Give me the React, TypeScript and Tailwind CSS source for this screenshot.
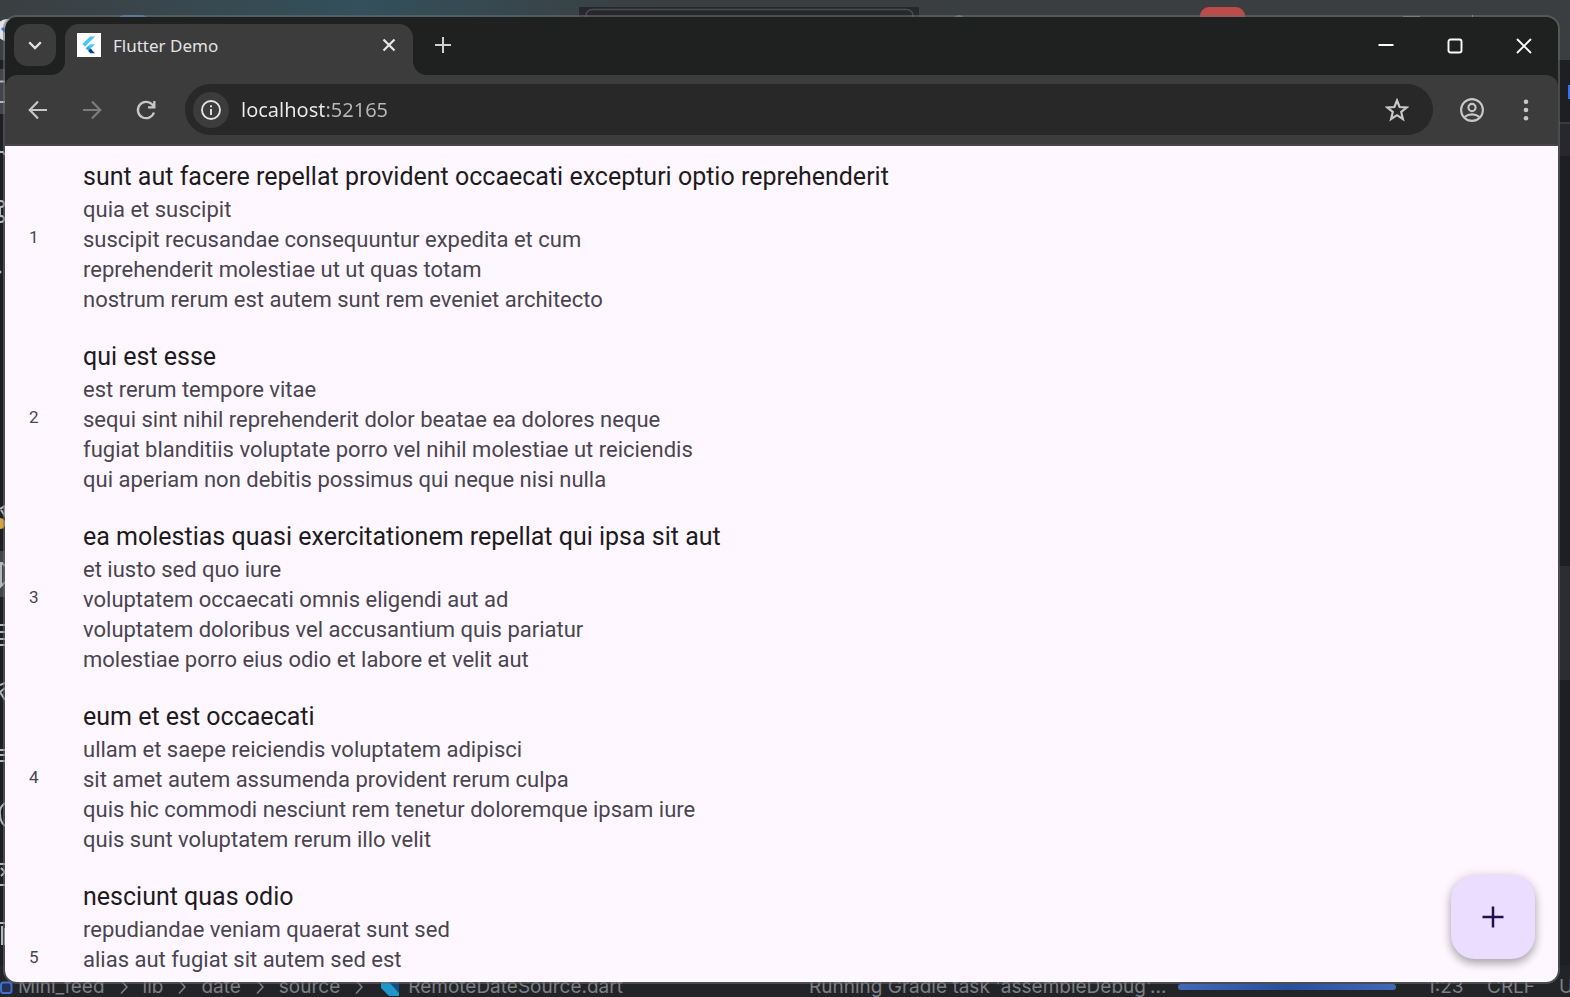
import React from "react";

type Post = { id: number; title: string; body: string[] };

const posts: Post[] = [
  {
    id: 1,
    title: "sunt aut facere repellat provident occaecati excepturi optio reprehenderit",
    body: [
      "quia et suscipit",
      "suscipit recusandae consequuntur expedita et cum",
      "reprehenderit molestiae ut ut quas totam",
      "nostrum rerum est autem sunt rem eveniet architecto",
    ],
  },
  {
    id: 2,
    title: "qui est esse",
    body: [
      "est rerum tempore vitae",
      "sequi sint nihil reprehenderit dolor beatae ea dolores neque",
      "fugiat blanditiis voluptate porro vel nihil molestiae ut reiciendis",
      "qui aperiam non debitis possimus qui neque nisi nulla",
    ],
  },
  {
    id: 3,
    title: "ea molestias quasi exercitationem repellat qui ipsa sit aut",
    body: [
      "et iusto sed quo iure",
      "voluptatem occaecati omnis eligendi aut ad",
      "voluptatem doloribus vel accusantium quis pariatur",
      "molestiae porro eius odio et labore et velit aut",
    ],
  },
  {
    id: 4,
    title: "eum et est occaecati",
    body: [
      "ullam et saepe reiciendis voluptatem adipisci",
      "sit amet autem assumenda provident rerum culpa",
      "quis hic commodi nesciunt rem tenetur doloremque ipsam iure",
      "quis sunt voluptatem rerum illo velit",
    ],
  },
  {
    id: 5,
    title: "nesciunt quas odio",
    body: ["repudiandae veniam quaerat sunt sed", "alias aut fugiat sit autem sed est"],
  },
];

function FlutterLogo() {
  return (
    <svg viewBox="0 0 24 24" className="size-6 shrink-0" aria-hidden="true">
      <rect width="24" height="24" fill="#fff" />
      <path d="M13.2 3.5H18L8 13.4 5.3 10.9Z" fill="#47c5fb" />
      <path d="M13.3 11.2H18L13.6 15.6 10.9 13.2Z" fill="#47c5fb" />
      <path d="M8.6 15.5 11.2 12.9 15.5 17.3 12.6 18.5Z" fill="#35a9e8" />
      <path d="M11.2 18.1 13.6 15.7 18 20.2H13.4Z" fill="#0b3f8f" />
    </svg>
  );
}

function TabFlare({ side }: { side: "left" | "right" }) {
  return (
    <svg viewBox="0 0 14 14" className="size-[14px] shrink-0 self-end" aria-hidden="true">
      <path d={side === "left" ? "M14 0V14H0A14 14 0 0 0 14 0Z" : "M0 0V14H14A14 14 0 0 1 0 0Z"} fill="#3c3c3c" />
    </svg>
  );
}

function TabStrip() {
  return (
    <header className="flex h-[58px] shrink-0 bg-[#1f2120] pt-[7px] pl-[9px]">
      <button aria-label="Search tabs" className="flex size-[42px] items-center justify-center rounded-[14px] bg-[#3c3c3c]">
        <svg viewBox="0 0 14 14" className="size-[14px]" fill="none" stroke="#e3e3e3" strokeWidth="2.3" aria-hidden="true">
          <path d="M1.2 4.2 7 10 12.8 4.2" />
        </svg>
      </button>
      <div className="-ml-[5px] flex">
        <TabFlare side="left" />
        <div className="flex w-[348px] items-center rounded-t-[14px] bg-[#3c3c3c] pr-4 pb-[9px] pl-3">
          <FlutterLogo />
          <span className="ml-3 flex-1 pt-[2px] font-['Noto_Sans','Open_Sans',sans-serif] text-[17px] leading-6 text-[#e3e3e3]">
            Flutter Demo
          </span>
          <button aria-label="Close tab" className="flex size-4 items-center justify-center">
            <svg viewBox="0 0 14 14" className="size-[14px]" fill="none" stroke="#e8e8e8" strokeWidth="2.2" aria-hidden="true">
              <path d="M1.5 1.5 12.5 12.5M12.5 1.5 1.5 12.5" />
            </svg>
          </button>
        </div>
        <TabFlare side="right" />
      </div>
      <button aria-label="New tab" className="ml-2 flex h-[42px] w-4 items-center justify-center">
        <svg viewBox="0 0 16 16" className="size-4" fill="none" stroke="#d0d0d0" strokeWidth="2" aria-hidden="true">
          <path d="M8 0V16M0 8H16" />
        </svg>
      </button>
      <div className="ml-auto flex h-11 text-white">
        <button aria-label="Minimize" className="flex w-[69px] items-center justify-center">
          <svg viewBox="0 0 16 16" className="size-4" aria-hidden="true">
            <path d="M.5 7H15.5" stroke="currentColor" strokeWidth="2" />
          </svg>
        </button>
        <button aria-label="Maximize" className="flex w-[69px] items-center justify-center">
          <svg viewBox="0 0 16 16" className="size-4" aria-hidden="true">
            <rect x="1.5" y="1.5" width="13" height="13" rx="2" fill="none" stroke="currentColor" strokeWidth="1.9" />
          </svg>
        </button>
        <button aria-label="Close" className="flex w-[69px] items-center justify-center">
          <svg viewBox="0 0 16 16" className="size-4" aria-hidden="true">
            <path d="M1 1 15 15M15 1 1 15" stroke="currentColor" strokeWidth="1.9" />
          </svg>
        </button>
      </div>
    </header>
  );
}

function Toolbar() {
  return (
    <div className="bg-[#1f2120]">
      <div className="flex h-[71px] items-center rounded-t-[12px] border-b-2 border-[#464648] bg-[#3c3c3c] pr-5">
        <div className="flex w-[180px] items-center gap-[30px] pl-[21px] text-[#c7c7c7]">
          <button aria-label="Back">
            <svg viewBox="0 0 24 24" className="size-6" fill="none" stroke="currentColor" strokeWidth="2.2" aria-hidden="true">
              <path d="M21 12H4.5M12 3.5 3.8 12 12 20.5" />
            </svg>
          </button>
          <button aria-label="Forward" className="text-[#7c7c7c]" disabled>
            <svg viewBox="0 0 24 24" className="size-6" fill="none" stroke="currentColor" strokeWidth="2.2" aria-hidden="true">
              <path d="M3 12H19.5M12 3.5 20.2 12 12 20.5" />
            </svg>
          </button>
          <button aria-label="Reload">
            <svg viewBox="0 0 24 24" className="size-6" fill="none" stroke="currentColor" strokeWidth="2.3" aria-hidden="true">
              <path d="M19.9 14.5A8.2 8.2 0 1 1 18.2 6.5L20.3 8.8M20.3 3V9.3H14" />
            </svg>
          </button>
        </div>
        <div className="flex h-[51px] min-w-0 flex-1 items-center rounded-full bg-[#282828] pr-6 pl-2">
          <button aria-label="Site information" className="flex size-9 items-center justify-center rounded-full bg-[#3c3c3c]">
            <svg viewBox="0 0 20 20" className="size-5" fill="none" stroke="#e3e3e3" strokeWidth="1.9" aria-hidden="true">
              <circle cx="10" cy="10" r="9" />
              <path d="M10 9V15M10 5.2V7.2" />
            </svg>
          </button>
          <input
            aria-label="Address"
            defaultValue="localhost:52165"
            className="ml-3 min-w-0 flex-1 bg-linear-to-r from-[#ededed] from-[83px] to-[#b8b8b8] to-[83px] bg-clip-text font-['Noto_Sans','Open_Sans',sans-serif] text-[20px] leading-8 text-transparent outline-none"
          />
          <button aria-label="Bookmark">
            <svg viewBox="0 0 24 24" className="size-6" fill="none" stroke="#c7c7c7" strokeWidth="2.2" aria-hidden="true">
              <path d="M12 2.5 14.6 9 21.6 9.5 16.2 14 17.9 21 12 17.2 6.1 21 7.8 14 2.4 9.5 9.4 9Z" />
            </svg>
          </button>
        </div>
        <button aria-label="Profile" className="ml-[27px]">
          <svg viewBox="0 0 24 24" className="size-6" fill="none" stroke="#c7c7c7" strokeWidth="2.1" aria-hidden="true">
            <circle cx="12" cy="12" r="10.9" />
            <circle cx="12" cy="9.5" r="3.6" />
            <path d="M4.5 19C9 15.5 15 15.5 19.5 19" />
          </svg>
        </button>
        <button aria-label="Menu" className="ml-[30px]">
          <svg viewBox="0 0 24 24" className="size-6" fill="#c7c7c7" aria-hidden="true">
            <circle cx="12" cy="3.8" r="2.3" />
            <circle cx="12" cy="12" r="2.3" />
            <circle cx="12" cy="20.2" r="2.3" />
          </svg>
        </button>
      </div>
    </div>
  );
}

function PostItem({ post }: { post: Post }) {
  return (
    <li className="flex items-center pt-[13px] pb-[11px] pl-6">
      <span className="w-[54px] shrink-0 text-[17px] leading-6 text-[#49454f]">{post.id}</span>
      <div className="min-w-0">
        <h2 className="text-[25px] leading-9 text-[#1d1b20]">{post.title}</h2>
        <div className="min-h-[120px] text-[22px] leading-[30px] text-[#49454f]">
          {post.body.map((line) => (
            <p key={line}>{line}</p>
          ))}
        </div>
      </div>
    </li>
  );
}

function BrowserWindow() {
  return (
    <div className="absolute top-[15px] right-[10px] bottom-[13px] left-[3px] flex flex-col overflow-hidden rounded-[14px] border-2 border-[#6c6e70]/55">
      <TabStrip />
      <Toolbar />
      <main className="relative min-h-0 flex-1 bg-[#fef7ff] font-[Roboto,sans-serif]">
        <ul className="h-full overflow-y-auto [scrollbar-width:none]">
          {posts.map((post) => (
            <PostItem key={post.id} post={post} />
          ))}
        </ul>
        <button
          aria-label="Add"
          className="absolute right-[23px] bottom-[23px] flex size-[84px] items-center justify-center rounded-3xl bg-[#eaddff] shadow-[0_5px_8px_rgba(0,0,0,0.25),0_1px_12px_rgba(0,0,0,0.14)]"
        >
          <svg viewBox="0 0 22 22" className="size-[22px]" stroke="#21104d" strokeWidth="2.5" aria-hidden="true">
            <path d="M11 .5V21.5M.5 11H21.5" />
          </svg>
        </button>
      </main>
    </div>
  );
}

function ToolStripe() {
  return (
    <svg viewBox="0 0 5 905" className="h-[905px] w-[5px] shrink-0" fill="none" stroke="#b4b8bf" strokeWidth="2" aria-hidden="true">
      <path d="M0 9H5V54H0Z" fill="#43454a" stroke="none" />
      <path d="M0 21.5H5M0 42H5M0 92H3L5 95" />
      <circle cx="1" cy="144" r="3" />
      <circle cx="1" cy="159" r="3" />
      <path d="M0 147V156" />
      <circle cx="0" cy="212" r="1.5" fill="#b4b8bf" stroke="none" />
      <path d="M0 449 5 446V456L1 450" />
      <path d="M0 458A5.5 5.5 0 0 1 0 469Z" fill="#d5a441" stroke="none" />
      <path d="M0 491H5V537H0Z" fill="#43454a" stroke="none" />
      <path d="M0 503H2L5 506M1 504V526L5 522M0 565H5M0 572H5M0 579H5M0 585H5" />
      <path d="M0 625 5 623M0 632 5 628M0 632 5 640M0 690H5M0 695H5M0 701H5" />
      <path d="M5 743Q-1 747 0 754 0 762 5 766M0 804H5M0 825H5M1 808 5 812 1 816M0 863 5 863M2 866V885M5 868V885" />
    </svg>
  );
}

function EditorBackdrop() {
  return (
    <div className="flex h-full flex-col bg-[#1e1f22]">
      <div className="flex h-[60px] shrink-0 items-start bg-linear-to-r from-[#3b3f41] via-[#33505c] via-[23%] to-[#3a3e40] to-[42%]">
        <svg viewBox="0 0 1570 60" className="h-[60px] w-full" preserveAspectRatio="xMinYMin slice" aria-hidden="true">
          <circle cx="7" cy="30" r="11" fill="#dfe3e8" />
          <path d="M2 28 8 34" stroke="#3574f0" strokeWidth="3" />
          <rect x="118" y="15" width="30" height="30" rx="6" fill="#4f88c7" />
          <rect x="579" y="7" width="340" height="40" fill="#27282c" />
          <rect x="586" y="9.5" width="327" height="36" rx="6" fill="none" stroke="#494b50" strokeWidth="1.5" />
          <circle cx="959" cy="21" r="6" fill="#57965c" />
          <rect x="1200" y="7" width="45" height="45" rx="9" fill="#bd4b48" />
          <rect x="1403" y="16" width="17" height="17" fill="#898c91" />
          <rect x="1472" y="15" width="1" height="2" fill="#d5a441" />
        </svg>
      </div>
      <div className="flex min-h-0 flex-1 justify-between overflow-hidden">
        <ToolStripe />
        <div className="flex w-[11px] flex-col">
          <div className="flex h-[64px] items-start justify-end border-b-2 border-[#393b40] pt-[25px]">
            <span className="h-[14px] w-[2px] bg-[#3574f0]" />
          </div>
          <div className="h-[32px] bg-[#26282e]" />
          <div className="h-[410px]" />
          <div className="h-[114px] bg-[#2b2d30]" />
        </div>
      </div>
      <footer className="flex h-8 shrink-0 items-end overflow-hidden bg-[#232427] font-[Inter,sans-serif] text-[19px] leading-5 whitespace-nowrap text-[#7d8086]">
        <svg viewBox="0 0 18 20" className="h-5 w-[18px] shrink-0" aria-hidden="true">
          <rect x="1" y="5.5" width="10.5" height="10.5" rx="2.5" fill="#25324d" stroke="#3f6fd0" strokeWidth="2" />
        </svg>
        <nav className="flex w-[791px] shrink-0 items-end gap-[15px]">
          <span>Mini_feed</span>
          <Chevron />
          <span>lib</span>
          <Chevron />
          <span>date</span>
          <Chevron />
          <span>source</span>
          <Chevron />
          <span className="flex gap-2 pl-[2px]">
            <svg viewBox="0 0 20 20" className="size-5" aria-hidden="true">
              <path d="M2 3H19V16Z" fill="#0b4f86" />
              <path d="M1 3H7L19 16V19H9L1 11Z" fill="#2196c9" />
            </svg>
            RemoteDateSource.dart
          </span>
        </nav>
        <span className="w-[369px] shrink-0">Running Gradle task 'assembleDebug'...</span>
        <span className="mb-[7px] h-[6px] w-[218px] shrink-0 rounded-full bg-linear-to-r from-[#4269b8] via-[#274f9c] to-[#4269b8]" />
        <span className="ml-[31px] w-[60px] shrink-0">1:23</span>
        <span className="w-[72px] shrink-0">CRLF</span>
        <span>U</span>
      </footer>
    </div>
  );
}

function Chevron() {
  return (
    <svg viewBox="0 0 8 20" className="h-5 w-2 shrink-0" fill="none" stroke="#7d8086" strokeWidth="1.6" aria-hidden="true">
      <path d="M1 3.5 7 10 1 16.5" />
    </svg>
  );
}

export default function App() {
  return (
    <div className="relative h-screen overflow-hidden">
      <EditorBackdrop />
      <BrowserWindow />
    </div>
  );
}
